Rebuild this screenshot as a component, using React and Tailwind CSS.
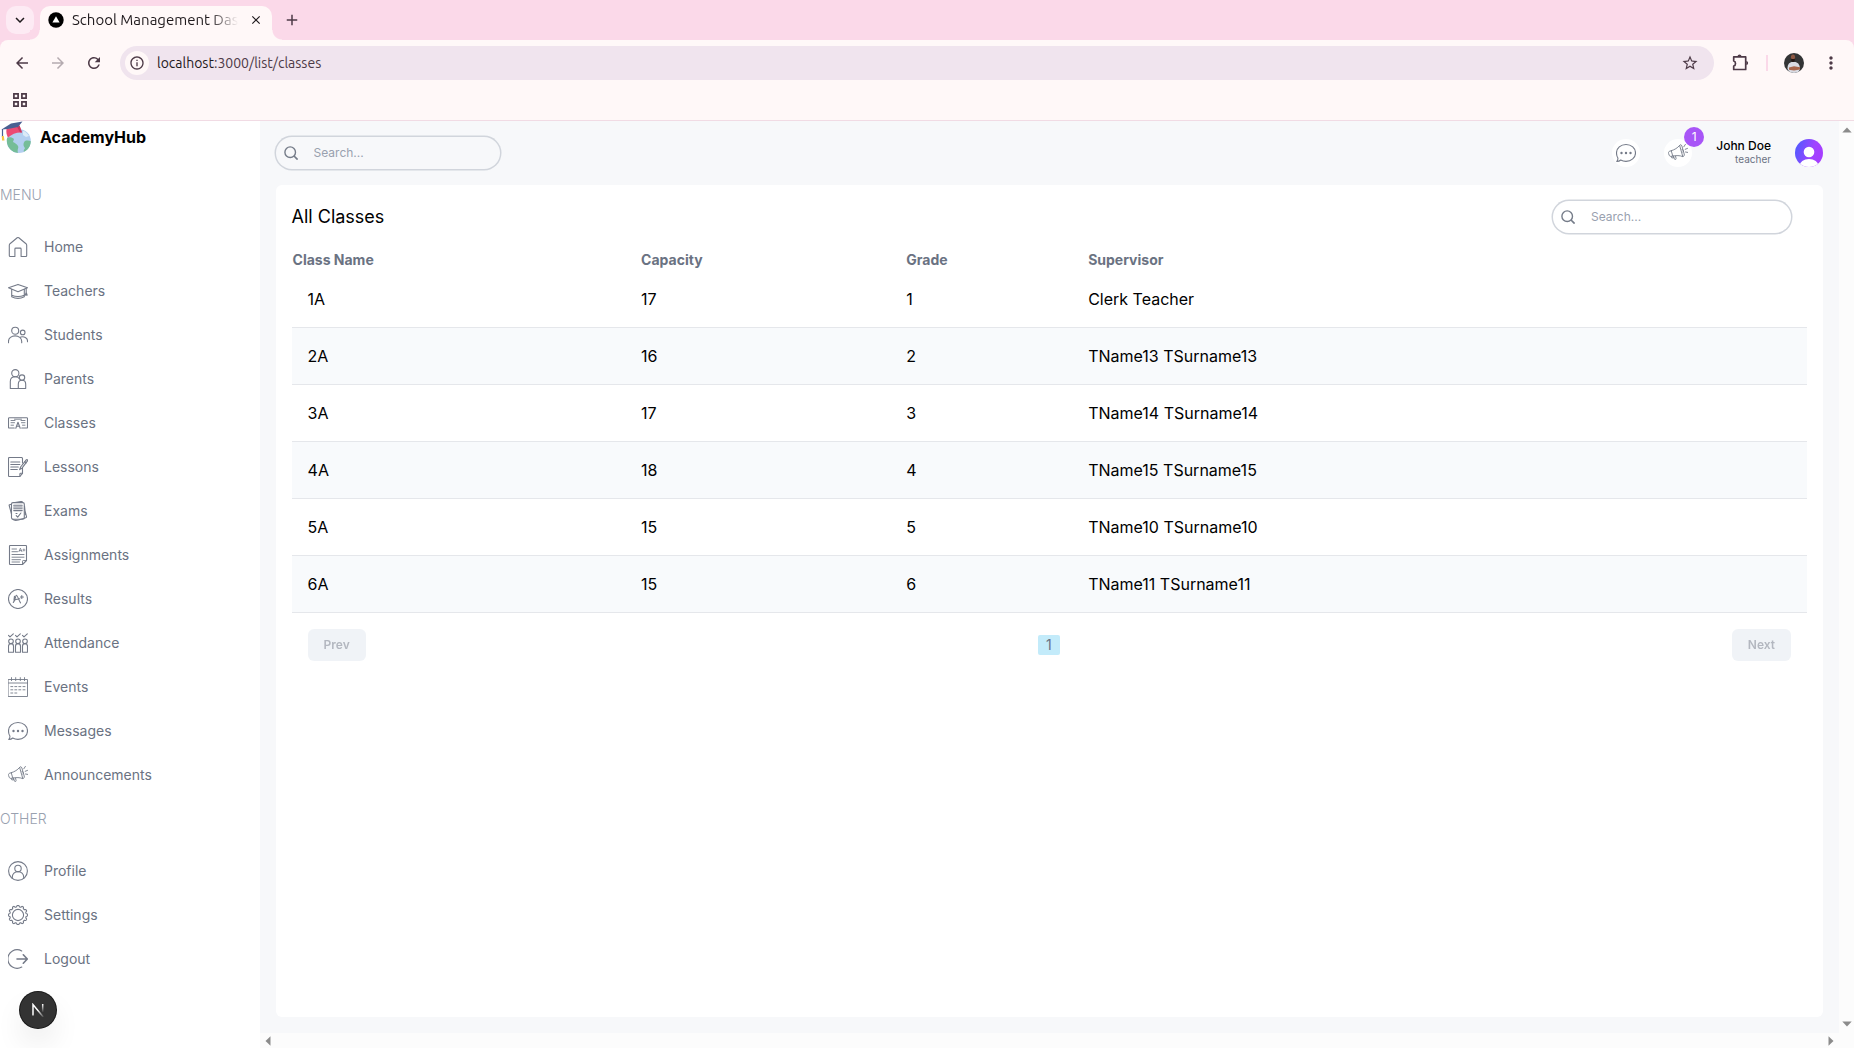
import React from "react";
import {
  MdAdd,
  MdArrowBack,
  MdArrowForward,
  MdClose,
  MdInfoOutline,
  MdKeyboardArrowDown,
  MdMoreVert,
  MdRefresh,
  MdStarBorder,
} from "react-icons/md";

function Glyph({ children, className = "size-5" }) {
  return (
    <svg
      viewBox="0 0 20 20"
      className={className}
      fill="none"
      stroke="#747a88"
      strokeWidth="1.1"
      strokeLinecap="round"
      strokeLinejoin="round"
      aria-hidden="true"
    >
      {children}
    </svg>
  );
}

const gearPath = (() => {
  const teeth = 12;
  const points = [];
  for (let i = 0; i < 144; i += 1) {
    const angle = (i / 144) * Math.PI * 2;
    const radius = 8.9 + 0.75 * Math.tanh(2.2 * Math.cos(angle * teeth));
    points.push(
      `${(10 + radius * Math.sin(angle)).toFixed(2)} ${(10 - radius * Math.cos(angle)).toFixed(2)}`
    );
  }
  return `M${points.join("L")}Z`;
})();

const HomeIcon = () => (
  <Glyph>
    <path d="M1.3 8.2c0-.6.3-1.1.7-1.5L9.2.8c.5-.4 1.1-.4 1.6 0L18 6.7c.4.4.7.9.7 1.5v10.400c0 .5-.4.9-.9.9H13.100v-7.500c0-.5-.4-.9-.9-.9H7.800c-.5 0-.9.4-.9.9v7.500H2.200c-.5 0-.9-.4-.9-.9Z" />
  </Glyph>
);
const TeacherIcon = () => (
  <Glyph>
    <path d="M.5 6.800 10 3.400l9.500 3.400L10 10.700Z" />
    <path d="M3.700 8.300v7.200M16.300 8.300v7.200M3.700 14.200c3.600 1.500 9 1.500 12.600 0M3.700 15.700c3.600 1.900 9 1.900 12.600 0M18.200 7.500v4M18.200 11.500l-1 2.600M18.200 11.500l1 2.600M18.200 11.500v2.800" />
  </Glyph>
);
const StudentIcon = () => (
  <Glyph>
    <circle cx="7.200" cy="5.700" r="3.500" />
    <circle cx="14.700" cy="7.400" r="2.300" />
    <path d="M.5 17.700v-1.500c0-3.200 3-5.300 6.600-5.300s6.600 2.100 6.600 5.300v1.500M12.700 12.100c3.300-1.100 6.800.8 6.800 3.700v1" />
  </Glyph>
);
const ParentIcon = () => (
  <Glyph>
    <circle cx="7.300" cy="4.200" r="3.600" />
    <circle cx="14" cy="8.600" r="2.700" />
    <path d="M10.300 19.500H2.300v-7c0-2.800 2-4.700 5-4.700 1.600 0 2.900.5 3.800 1.500M10.300 19.500v-4.300c0-2.200 1.500-3.900 3.700-3.900s3.700 1.700 3.700 3.900v4.300h-7.400" />
  </Glyph>
);
const ClassIcon = () => (
  <Glyph>
    <path d="M6.300 15H1.300a.8.8 0 0 1-.8-.8V5.600c0-.5.300-.9.800-.9h17.400c.5 0 .8.400.8.9v8.600c0 .5-.300.8-.8.8h-5" />
    <path d="M3 7.500h4M3 9.700h3.500M3 12.200h2.500M13 7.500h4M13.500 9.700H17M14.500 12.200H17M6.500 6.200h7" strokeWidth=".9" />
    <path d="m7.800 15.300 2.200-6 2.200 6M8.600 13.200h2.800" />
  </Glyph>
);
const LessonIcon = () => (
  <Glyph>
    <path d="M14.500 6V1.600c0-.6-.4-1.100-1.100-1.100H1.500C.9.500.5 1 .5 1.600v16.800c0 .6.4 1.100 1 1.100h10.400l2.600-3.200v-5" />
    <path d="M11.900 19.300v-2.200c0-.5.3-.8.8-.8h1.600M2.800 5h9M2.800 7.500h9M2.800 10h7.500M2.800 12.500h6.500" />
    <path d="m11.600 12.600 1-2.600 5.600-7.200c.7-.6 1.800.2 1.300 1.100L14 11.200Z" />
    <path d="m16.800 4.800 1.300 1" />
  </Glyph>
);
const ExamIcon = () => (
  <Glyph>
    <rect x="3.500" y="1.600" width="12.800" height="16.600" rx="1.500" />
    <path d="M3.400 3.200 1.500 3.700c-.3.100-.4.400-.3.800l2.300 8.700M7 1.500 13 .5c.6-.1 1.400.1 1.600 1M16.400 7.500l2.100 8.200c.1.500-.2.900-.7 1L10.500 19c-1.200.300-4.700.5-5.800-.8M16.500 5l.9 8.500" />
    <path d="M5.700 4.200h8.500M5.700 6h8.500M5.700 7.800h8.500M5.700 9.600h8.500" />
    <path d="m8.200 14.600 1.500 1.600 3.200-4.200M8 12.500h1" />
  </Glyph>
);
const AssignmentIcon = () => (
  <Glyph>
    <path d="M18.500 15.500V1.200a.7.7 0 0 0-.7-.7H2.200a.7.7 0 0 0-.7.7v17.600c0 .4.300.7.7.7h12.300Z" />
    <path d="M14.500 19.300v-3.100c0-.4.300-.7.7-.7h3.100M4 4h4.500M4 6.700h5.500M4 9.500h12M4 12.200h12M4 14.700h8.500M4 17h7.500" strokeWidth=".9" />
    <path d="m10.900 6.600 1.500-3.400 1.500 3.400M11.400 5.600h2M14.900 5h2M15.900 4v2" strokeWidth=".8" />
  </Glyph>
);
const ResultIcon = () => (
  <Glyph>
    <circle cx="10" cy="10" r="9.500" />
    <path d="M5.300 13.500C7.300 12 7.500 6.500 8.300 6.200c1.100-.4 2.500 5.300 4.200 7.600M6 11.200c1.600-.8 4-1.400 5.800-1.500M12.400 8h3M13.800 6.500v3M6.500 7.200l-.5 3.600" />
  </Glyph>
);
const AttendanceIcon = () => (
  <Glyph>
    {[3, 10, 17].map((x) => (
      <g key={x} transform={`translate(${x} 0)`}>
        <path d="m-2.500 2.400 1.500 1.500 3.300-3" />
        <circle cx="0" cy="8.300" r="2.300" />
        <path d="M-2.500 19.200v-6c0-1.600 1-2.600 2.500-2.600s2.500 1 2.500 2.600v6Z" />
      </g>
    ))}
  </Glyph>
);
const EventIcon = () => (
  <Glyph>
    <g strokeWidth=".9">
      <path d="M.5 2.500h19v17H.5ZM.5 6h19" />
      <path d="M3.500.6v3M7.700.6v3M12.300.6v3M16.500.6v3" />
      <path d="M2.800 9.600h2M6.800 9.600h2M10.800 9.600h2M15 9.600h2M2.800 12.800h2M6.800 12.800h2M10.800 12.800h2M15 12.800h2M2.800 16h2M6.800 16h2" />
    </g>
  </Glyph>
);
const MessageIcon = ({ className }) => (
  <Glyph className={className}>
    <path d="M10 1.500c5.300 0 9.500 3.600 9.500 8.400s-4.200 8.500-9.500 8.500c-2 0-3.800-.5-5.300-1.400-.9.900-2.200 1.400-3.900 1.400.9-1 1.200-2 1.100-3.400C1 13.600.5 12 .5 9.900.5 5.100 4.700 1.500 10 1.500Z" />
    <g fill="#747a88" stroke="none">
      <circle cx="5.500" cy="10" r="1.200" />
      <circle cx="10" cy="10" r="1.200" />
      <circle cx="14.500" cy="10" r="1.200" />
    </g>
  </Glyph>
);
const AnnouncementIcon = ({ className }) => (
  <Glyph className={className}>
    <g strokeWidth=".9">
      <path d="M3.600 7.600c3-.9 5.900-2.600 8-5.200l3.200 11.200c-3.100-1.200-6.500-1.300-9.600-.5Z" />
      <path d="M3.600 7.600 1.500 8.300C.6 8.600.3 9.500.6 10.500l.6 1.700c.3.900 1.100 1.300 2 1.100l2-.3" />
      <path d="M11.600 2.400c.5-1.100 1.700-1 2.300.6l2.300 8c.4 1.500-.2 2.500-1.400 2.600M14 6.300c1.200-.1 1.900 2.300.9 2.900" />
      <path d="m5.300 13.200 1.200 3c.3.700 1.800.3 1.600-.5L7.500 13M3.300 13.500l.6 1.500 1.900-.4" />
      <path d="m15.800 3.800 1.600-2.400M17.200 6.300l2.300-.9M17.500 9l2.200.4" />
    </g>
  </Glyph>
);
const ProfileIcon = () => (
  <Glyph>
    <circle cx="10" cy="10" r="9.400" />
    <circle cx="10" cy="7.400" r="3.200" />
    <path d="M4.300 17.500V16c0-3.100 2.500-5.400 5.700-5.400s5.700 2.300 5.700 5.400v1.500" />
  </Glyph>
);
const SettingsIcon = () => (
  <Glyph>
    <path d={gearPath} />
    <circle cx="10" cy="10" r="5.600" />
  </Glyph>
);
const LogoutIcon = () => (
  <Glyph>
    <path d="M13.700 1.900A9.300 9.300 0 1 0 13.700 18.100" strokeWidth="1.200" />
    <path d="M9 10h10M15.300 5.800l4 4.200-4 4.200" strokeWidth="1.600" />
  </Glyph>
);

const menu = [
  {
    title: "MENU",
    items: [
      ["Home", HomeIcon],
      ["Teachers", TeacherIcon],
      ["Students", StudentIcon],
      ["Parents", ParentIcon],
      ["Classes", ClassIcon],
      ["Lessons", LessonIcon],
      ["Exams", ExamIcon],
      ["Assignments", AssignmentIcon],
      ["Results", ResultIcon],
      ["Attendance", AttendanceIcon],
      ["Events", EventIcon],
      ["Messages", MessageIcon],
      ["Announcements", AnnouncementIcon],
    ],
  },
  {
    title: "OTHER",
    items: [
      ["Profile", ProfileIcon],
      ["Settings", SettingsIcon],
      ["Logout", LogoutIcon],
    ],
  },
];

const classes = [
  ["1A", 17, 1, "Clerk Teacher"],
  ["2A", 16, 2, "TName13 TSurname13"],
  ["3A", 17, 3, "TName14 TSurname14"],
  ["4A", 18, 4, "TName15 TSurname15"],
  ["5A", 15, 5, "TName10 TSurname10"],
  ["6A", 15, 6, "TName11 TSurname11"],
];

function BrowserBar() {
  return (
    <header className="shrink-0 border-b border-[#f1dbe4] bg-[#fff8f8] font-['Ubuntu','Lato',sans-serif] text-[#4d3a47]">
      <div className="bg-[#fbd9e9]">
        <div className="flex h-10 items-end px-[6px]">
          <button
            aria-label="Search tabs"
            className="mb-[6px] flex size-7 items-center justify-center rounded-[10px] bg-[#fdebf4] text-[#1f1a1d]"
          >
            <MdKeyboardArrowDown className="size-[18px]" />
          </button>
          <div className="relative ml-[6px] flex h-[34px] w-58 items-center rounded-t-[10px] bg-[#fff8f8] pr-2 pl-2 text-[#1f1a1d]">
            <span className="absolute bottom-0 -left-[10px] size-[10px] bg-[radial-gradient(circle_at_0_0,#fbd9e9_9px,#fff8f8_10px)]" />
            <span className="absolute -right-[10px] bottom-0 size-[10px] bg-[radial-gradient(circle_at_100%_0,#fbd9e9_9px,#fff8f8_10px)]" />
            <svg viewBox="0 0 16 16" className="mb-[6px] size-4 shrink-0" aria-hidden="true">
              <circle cx="8" cy="8" r="7.700" fill="#000" />
              <path d="M8 4.300 11.600 10.600H4.400Z" fill="#fff" />
            </svg>
            <span className="mb-[6px] ml-2 w-[168px] overflow-hidden text-[15px] leading-5 whitespace-nowrap [mask-image:linear-gradient(to_right,#000_82%,transparent_99%)]">
              School Management Das
            </span>
            <button aria-label="Close tab" className="mb-[6px] ml-auto flex size-4 items-center justify-center">
              <MdClose className="size-[14px]" />
            </button>
          </div>
          <button aria-label="New tab" className="mb-[11px] ml-[11px] flex size-[18px] items-center justify-center">
            <MdAdd className="size-[18px]" />
          </button>
        </div>
      </div>
      <div className="bg-[#fbd9e9]">
        <div className="flex h-[46px] items-center rounded-t-lg bg-[#fff8f8] px-[13px]">
          <button aria-label="Back"><MdArrowBack className="size-[18px]" /></button>
          <button aria-label="Forward" className="ml-[18px] text-[#b5abb0]"><MdArrowForward className="size-[18px]" /></button>
          <button aria-label="Reload" className="ml-[18px]"><MdRefresh className="size-[18px]" /></button>
          <div className="ml-[17px] flex h-[34px] flex-1 items-center rounded-full bg-[#f0e4ee] pr-[15px] pl-[5px]">
            <button aria-label="Site information" className="flex size-6 items-center justify-center rounded-full bg-[#fff8f8]">
              <MdInfoOutline className="size-4" />
            </button>
            <span className="ml-2 flex-1 text-sm">
              <span className="text-[#1f1a1d]">localhost</span>:3000/list/classes
            </span>
            <button aria-label="Bookmark"><MdStarBorder className="size-[18px]" /></button>
          </div>
          <button aria-label="Extensions" className="ml-4">
            <svg viewBox="0 0 20 20" className="size-5" fill="none" stroke="currentColor" strokeWidth="1.700" aria-hidden="true">
              <path d="M3.700 3.900H15.700V16.500H3.700V13.200C6.100 12.700 6.100 8.500 3.700 8Z" strokeLinejoin="round" />
              <path d="M7.500 3.400c0-2.700 4-2.700 4 0ZM16.300 7.900c2.400 0 2.400 4 0 4Z" fill="currentColor" stroke="none" />
            </svg>
          </button>
          <span className="ml-4 h-4 w-[2px] bg-[#fbd9e9]" />
          <button aria-label="Browser profile" className="ml-4">
            <svg viewBox="0 0 20 20" className="size-5 rounded-full" aria-hidden="true">
              <rect width="20" height="20" fill="#333435" />
              <path d="M3.500 16c0-4 1-6 4-7h4c3.200 1 4.200 3 4.500 7l-2 4H6Z" fill="#d9dbe3" />
              <ellipse cx="9" cy="4.500" rx="2.100" ry="3" fill="#8d5843" />
              <path d="M7 5.500c1 .8 3 .8 4 0 0 2.500-.8 3.400-2 3.400s-2-.9-2-3.400Z" fill="#241816" />
              <path d="m5 14.500 5-1.200 6 1v2.200l-6 .9-5-.7Z" fill="#a8664c" />
            </svg>
          </button>
          <button aria-label="Browser menu" className="ml-[17px]"><MdMoreVert className="size-5" /></button>
        </div>
      </div>
      <div className="flex h-[34px] items-center pb-[6px] pl-[13px]">
        <button aria-label="Apps">
          <svg viewBox="0 0 14 14" className="size-[14px]" fill="none" stroke="currentColor" strokeWidth="1.700" aria-hidden="true">
            <path d="M.9.900h4.200v4.200H.9ZM8.900.900h4.200v4.200H8.900ZM.9 8.900h4.200v4.200H.9ZM8.900 8.900h4.200v4.200H8.900Z" />
          </svg>
        </button>
      </div>
    </header>
  );
}

function Logo() {
  return (
    <svg viewBox="0 0 32 32" className="size-8" aria-hidden="true">
      <defs>
        <clipPath id="globe"><circle cx="18.800" cy="20" r="12" /></clipPath>
      </defs>
      <circle cx="18.800" cy="20" r="12" fill="#b3cff0" />
      <g clipPath="url(#globe)" fill="#75bd98">
        <path d="M6 17c3-1 6-1 8 1l-1 3c2 1 4 2 5 4s-1 3 0 7c-6 0-12-6-12-15Z" />
        <path d="M25 20c3-1 6 0 7 1l-3 8-5 2c-1-2 1-3 1-4-2-2-2-5 0-7Z" />
        <path d="M23 10c2 0 4 2 6 5l-3 1-3-2Z" fill="#dcebf8" />
      </g>
      <path d="M6.500 8 19.500 4.500 22 11.500C17 11 12 13 8 16.500 6.500 14 6 11 6.500 8Z" fill="#ec4a74" />
      <path d="M19.500 4.500 22 11.500 20 11.300 17 6Z" fill="#c9395f" />
      <path d="M1.500 8.500 11 2.500 22.500.5 18 6 8 8Z" fill="#4a5f92" />
      <path d="M2.500 8v8" stroke="#4a5f92" strokeWidth="1.200" />
      <path d="M1.800 15h2l.7 4.500H2Z" fill="#f6c544" />
    </svg>
  );
}

function Sidebar() {
  return (
    <aside className="w-[14%] shrink-0 bg-white text-sm">
      <a href="#home" className="flex items-center gap-2 text-base font-bold text-black">
        <Logo />
        <span>AcademyHub</span>
      </a>
      <nav className="mt-4">
        {menu.map(({ title, items }) => (
          <div key={title} className="flex flex-col gap-2">
            <span className="my-4 font-light text-gray-400">{title}</span>
            {items.map(([label, Icon]) => (
              <a key={label} href={`#${label.toLowerCase()}`} className="flex items-center gap-4 px-2 py-2 text-gray-500">
                <Icon />
                <span>{label}</span>
              </a>
            ))}
          </div>
        ))}
      </nav>
    </aside>
  );
}

function SearchBox({ label, className }) {
  return (
    <label className={`flex items-center gap-2 rounded-full px-2 text-xs ring-[1.5px] ring-gray-300 ${className}`}>
      <svg viewBox="0 0 14 14" className="size-[14px] shrink-0" fill="none" stroke="#757c89" strokeWidth="1.400" aria-hidden="true">
        <circle cx="6.200" cy="6.200" r="5.300" />
        <path d="m10 10 3.600 3.600" strokeWidth="1.700" />
      </svg>
      <input
        type="text"
        aria-label={label}
        placeholder="Search..."
        className="w-full min-w-0 bg-transparent p-2 outline-none placeholder:text-gray-400"
      />
    </label>
  );
}

function Navbar() {
  return (
    <div className="flex items-center justify-between p-4">
      <SearchBox label="Search the dashboard" className="w-56" />
      <div className="flex items-center gap-6">
        <button aria-label="Messages" className="flex size-7 items-center justify-center rounded-full bg-white">
          <MessageIcon />
        </button>
        <button aria-label="Announcements" className="relative flex size-7 items-center justify-center rounded-full bg-white">
          <AnnouncementIcon />
          <span className="absolute -top-3 -right-3 flex size-5 items-center justify-center rounded-full bg-[#a855f7] text-xs text-white">
            1
          </span>
        </button>
        <div className="flex flex-col text-right">
          <span className="text-xs leading-3 font-medium">John Doe</span>
          <span className="text-[10px] text-gray-500">teacher</span>
        </div>
        <button aria-label="Account">
          <svg viewBox="0 0 28 28" className="size-7 rounded-full" aria-hidden="true">
            <defs>
              <linearGradient id="avatar" x1="0" y1=".2" x2="1" y2=".5">
                <stop offset="0" stopColor="#4f5bff" />
                <stop offset=".65" stopColor="#a044ff" />
                <stop offset="1" stopColor="#a63dff" />
              </linearGradient>
            </defs>
            <rect width="28" height="28" fill="url(#avatar)" />
            <circle cx="14" cy="13" r="5.300" fill="#fff" />
            <ellipse cx="14" cy="27" rx="9.500" ry="7" fill="#fff" />
          </svg>
        </button>
      </div>
    </div>
  );
}

function ClassTable() {
  return (
    <table className="mt-4 w-full table-fixed">
      <thead>
        <tr className="text-left text-sm text-gray-500">
          <th className="w-[23%] p-px">Class Name</th>
          <th className="w-[17.5%] p-px">Capacity</th>
          <th className="w-[12%] p-px">Grade</th>
          <th className="p-px">Supervisor</th>
        </tr>
      </thead>
      <tbody>
        {classes.map(([name, capacity, grade, supervisor]) => (
          <tr key={name} className="border-b border-gray-200 even:bg-slate-50">
            <td className="p-4">{name}</td>
            <td className="p-px">{capacity}</td>
            <td className="p-px">{grade}</td>
            <td className="p-px">{supervisor}</td>
          </tr>
        ))}
      </tbody>
    </table>
  );
}

function Pagination() {
  return (
    <div className="flex items-center justify-between p-4 text-gray-500">
      <button disabled className="rounded-md bg-slate-200 px-4 py-2 text-xs font-semibold opacity-50">
        Prev
      </button>
      <button className="rounded-xs bg-[#c3ebfa] px-2 text-sm">1</button>
      <button disabled className="rounded-md bg-slate-200 px-4 py-2 text-xs font-semibold opacity-50">
        Next
      </button>
    </div>
  );
}

function Arrow({ className }) {
  return (
    <svg viewBox="0 0 10 10" className={`size-[10px] ${className}`} aria-hidden="true">
      <path d="M5 2.500 9.700 7.500H.3Z" fill="#8b8b8b" />
    </svg>
  );
}

export default function App() {
  return (
    <div className="flex h-screen flex-col overflow-hidden bg-white font-['Inter',sans-serif] text-base text-black">
      <BrowserBar />
      <div className="flex min-h-0 flex-1">
        <Sidebar />
        <div className="flex min-w-0 flex-1 flex-col bg-[#fcfcfc]">
          <div className="flex min-h-0 flex-1">
            <main className="flex min-w-0 flex-1 flex-col bg-[#f7f8fa]">
              <Navbar />
              <section className="m-4 mt-0 flex-1 rounded-md bg-white p-4">
                <div className="flex items-center justify-between pr-4">
                  <h1 className="text-lg">All Classes</h1>
                  <SearchBox label="Search classes" className="w-[238px]" />
                </div>
                <ClassTable />
                <Pagination />
              </section>
            </main>
            <div className="flex w-[15px] flex-col items-center justify-between py-1">
              <Arrow className="" />
              <Arrow className="rotate-180" />
            </div>
          </div>
          <div className="mr-[15px] flex h-[15px] items-center justify-between px-[3px]">
            <Arrow className="-rotate-90" />
            <Arrow className="rotate-90" />
          </div>
        </div>
      </div>
      <button
        aria-label="Open developer tools"
        className="fixed bottom-5 left-5 flex size-9 items-center justify-center rounded-full bg-[#333] shadow-[0_16px_32px_-8px_rgba(0,0,0,0.24)] ring-1 ring-[#171717]"
      >
        <svg viewBox="0 0 14 14" className="size-[14px]" fill="none" strokeWidth="1.500" aria-hidden="true">
          <defs>
            <linearGradient id="stem" gradientUnits="userSpaceOnUse" x1="11" y1="1" x2="11" y2="9.500">
              <stop stopColor="#fff" />
              <stop offset="1" stopColor="#fff" stopOpacity="0" />
            </linearGradient>
            <linearGradient id="slant" gradientUnits="userSpaceOnUse" x1="7" y1="7" x2="12.500" y2="14">
              <stop stopColor="#fff" />
              <stop offset="1" stopColor="#fff" stopOpacity="0.100" />
            </linearGradient>
          </defs>
          <path d="M2 12.500V1.600L12.300 14" stroke="url(#slant)" />
          <path d="M11.700 1v8.500" stroke="url(#stem)" />
        </svg>
      </button>
    </div>
  );
}
